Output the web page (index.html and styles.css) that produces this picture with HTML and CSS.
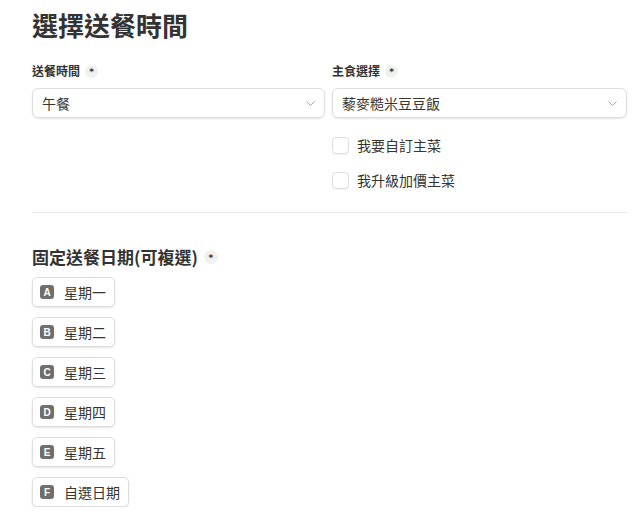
FILE: index.html
```html
<!DOCTYPE html>
<html lang="zh-Hant">
<head>
<meta charset="utf-8">
<title>選擇送餐時間</title>
<link rel="stylesheet" href="styles.css">
</head>
<body>
<div class="page">
  <h1 class="title">選擇送餐時間</h1>
  <div class="fields">
    <div class="field">
      <div class="label">送餐時間 <span class="req">*</span></div>
      <div class="select">
        <span>午餐</span>
        <svg class="chev" width="9" height="5" viewBox="0 0 9 5"><path d="M0.5 0.5l4 4 4-4" fill="none" stroke="#a8a8a8" stroke-width="1"/></svg>
      </div>
    </div>
    <div class="field">
      <div class="label">主食選擇 <span class="req">*</span></div>
      <div class="select">
        <span>藜麥糙米豆豆飯</span>
        <svg class="chev" width="9" height="5" viewBox="0 0 9 5"><path d="M0.5 0.5l4 4 4-4" fill="none" stroke="#a8a8a8" stroke-width="1"/></svg>
      </div>
      <div class="checks">
        <label class="check"><span class="box"></span><span>我要自訂主菜</span></label>
        <label class="check"><span class="box"></span><span>我升級加價主菜</span></label>
      </div>
    </div>
  </div>
  <div class="divider"></div>
  <h2 class="heading">固定送餐日期(可複選) <span class="req">*</span></h2>
  <div class="choices">
    <div class="choice"><span class="key">A</span><span>星期一</span></div>
    <div class="choice"><span class="key">B</span><span>星期二</span></div>
    <div class="choice"><span class="key">C</span><span>星期三</span></div>
    <div class="choice"><span class="key">D</span><span>星期四</span></div>
    <div class="choice"><span class="key">E</span><span>星期五</span></div>
    <div class="choice"><span class="key">F</span><span>自選日期</span></div>
  </div>
</div>
</body>
</html>
```
FILE: styles.css
```css
html, body {
  margin: 0;
  padding: 0;
  background: #ffffff;
}
body {
  font-family: "Noto Sans CJK TC", "Noto Sans", sans-serif;
  color: #37352f;
}
.page {
  width: 595px;
  padding: 7px 0 0 32px;
}
.title {
  margin: 0;
  font-size: 26px;
  line-height: 36px;
  font-weight: 700;
  color: #333333;
}
.fields {
  display: grid;
  grid-template-columns: 293px 295px;
  column-gap: 7px;
  margin-top: 18px;
}
.label {
  display: flex;
  align-items: center;
  font-size: 12px;
  line-height: 20px;
  font-weight: 700;
  color: #333333;
  margin-bottom: 7px;
}
.req {
  display: inline-flex;
  align-items: center;
  justify-content: center;
  width: 13px;
  height: 13px;
  margin-left: 5px;
  border-radius: 50%;
  background: #f1f1ef;
  font-family: "DejaVu Sans", sans-serif;
  font-size: 9px;
  font-weight: 700;
  color: #333;
  line-height: 1;
  padding-top: 3px;
  box-sizing: border-box;
}
.select {
  box-sizing: border-box;
  height: 30px;
  display: flex;
  align-items: center;
  justify-content: space-between;
  padding: 0 9px 0 9px;
  border: 1px solid #dddddb;
  border-radius: 6px;
  box-shadow: 0 1px 2px rgba(0, 0, 0, 0.10);
  font-size: 14px;
  color: #37352f;
}
.chev {
  margin-top: 1px;
}
.checks {
  display: flex;
  flex-direction: column;
  gap: 19px;
  margin-top: 19px;
}
.check {
  display: flex;
  align-items: center;
  height: 16px;
  font-size: 14px;
  line-height: 16px;
  color: #37352f;
}
.box {
  box-sizing: border-box;
  width: 17px;
  height: 17px;
  border: 1px solid #dcdcda;
  border-radius: 4px;
  margin-right: 8px;
  box-shadow: 0 1px 1px rgba(0, 0, 0, 0.05);
}
.divider {
  height: 1px;
  background: #e9e9e7;
  margin-top: 24px;
}
.heading {
  display: flex;
  align-items: center;
  margin: 33px 0 0 0;
  font-size: 17px;
  line-height: 22px;
  font-weight: 700;
  color: #333333;
}
.heading .req {
  margin-left: 6px;
  width: 14px;
  height: 14px;
}
.choices {
  display: flex;
  flex-direction: column;
  align-items: flex-start;
  gap: 10px;
  margin-top: 9px;
}
.choice {
  box-sizing: border-box;
  height: 30px;
  display: flex;
  align-items: center;
  padding: 0 8px 0 7px;
  border: 1px solid #dedede;
  border-radius: 5px;
  box-shadow: 0 1px 2px rgba(0, 0, 0, 0.12);
  font-size: 14px;
  color: #37352f;
}
.key {
  display: inline-flex;
  align-items: center;
  justify-content: center;
  width: 14px;
  height: 14px;
  border-radius: 3px;
  background: #6f6e6b;
  color: #ffffff;
  font-family: "Liberation Sans", sans-serif;
  font-size: 10px;
  font-weight: 700;
  margin-right: 10px;
}
```
